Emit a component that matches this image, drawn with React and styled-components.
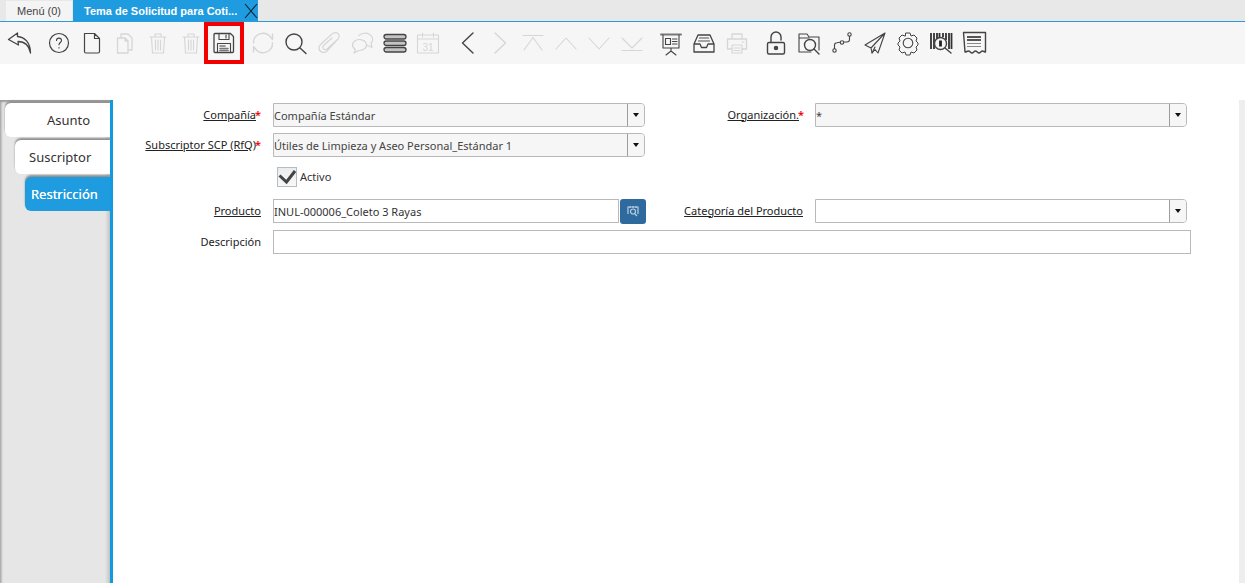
import React from 'react';
import styled, { createGlobalStyle } from 'styled-components';

const GlobalStyle = createGlobalStyle`
  html, body {
    margin: 0;
    padding: 0;
    background: #fff;
  }
  body {
    font-family: "Noto Sans", "Open Sans", sans-serif;
    color: #333;
    overflow: hidden;
  }
`;

const Page = styled.div`
  width: 1245px;
  height: 583px;
  display: flex;
  flex-direction: column;
  overflow: hidden;
`;

const TabStrip = styled.div`
  height: 21px;
  flex: none;
  display: flex;
  align-items: flex-end;
  padding-left: 6px;
  background: #e8e8e8;
  border-bottom: 1px solid #2d9bd8;
  font-family: "Liberation Sans", Arial, sans-serif;
  font-size: 11px;
`;

const MenuTab = styled.div`
  width: 66px;
  height: 20px;
  display: flex;
  align-items: center;
  justify-content: center;
  background: #f4f4f4;
  color: #444;
`;

const ActiveTab = styled.div`
  width: 185px;
  height: 21px;
  margin-left: 1px;
  padding-left: 11px;
  box-sizing: border-box;
  display: flex;
  align-items: center;
  background: #1f9ce0;
  color: #fff;
  font-weight: bold;
`;

const TabTitle = styled.span`
  width: 160px;
  white-space: nowrap;
`;

const Toolbar = styled.div`
  height: 42px;
  flex: none;
  display: flex;
  align-items: center;
  padding-left: 3.5px;
  background: #f6f6f6;
`;

const ToolButton = styled.div`
  position: relative;
  width: 33px;
  height: 42px;
  flex: none;
  display: flex;
  align-items: center;
  justify-content: center;
  margin-right: ${p => (p.$groupEnd ? '6px' : '0')};
  color: ${p => (p.$off ? '#d6d6d6' : '#444')};

  ${p => p.$marked && `
    &::after {
      content: '';
      position: absolute;
      left: -3.5px;
      top: 0;
      width: 40px;
      height: 42px;
      box-sizing: border-box;
      border: 4px solid #f00000;
    }
  `}
`;

const Spacer = styled.div`
  height: 36px;
  flex: none;
`;

const Body = styled.div`
  flex: 1;
  display: flex;
  min-height: 0;
`;

const SideTabs = styled.div`
  width: 110px;
  flex: none;
  display: flex;
  flex-direction: column;
  padding-top: 3px;
  box-sizing: border-box;
  background: linear-gradient(to right, #a8a8a8 0, #e6e6e6 3px, #e6e6e6 105px, #c4c4c4 110px);
  box-shadow: inset 0 3px 2px -1px #9a9a9a;
`;

const SideTab = styled.div`
  height: 34px;
  margin-left: ${p => p.$indent}px;
  margin-bottom: 3px;
  padding-left: ${p => p.$pad}px;
  display: flex;
  align-items: center;
  border-radius: 6px 0 0 6px;
  font-size: 13px;
  color: ${p => (p.$active ? '#fff' : '#333')};
  text-shadow: ${p => (p.$active ? '0 0 0.6px #fff' : 'none')};
  background: ${p => (p.$active ? '#1f9ce0' : '#fff')};
  box-shadow: 0 -2px 2px #8f8f8f;
`;

const Divider = styled.div`
  width: 3px;
  flex: none;
  background: #0f9ae2;
`;

const Content = styled.div`
  flex: 1;
  min-width: 0;
  padding-top: 3px;
`;

const FormRow = styled.div`
  display: flex;
  align-items: center;
  height: 24px;
  margin-bottom: ${p => p.$gap}px;
`;

const Label = styled.div`
  width: ${p => p.$width}px;
  flex: none;
  text-align: right;
  font-size: 11px;
  line-height: 16px;
  white-space: nowrap;
  margin-top: -1px;
`;

const LabelText = styled.span`
  text-decoration: ${p => (p.$plain ? 'none' : 'underline')};
  color: #222;
`;

const Required = styled.span`
  margin-left: -1px;
  color: #f00000;
  font-weight: 600;
`;

const Select = styled.div`
  width: ${p => p.$width}px;
  height: 24px;
  flex: none;
  margin-left: ${p => p.$offset}px;
  box-sizing: border-box;
  display: flex;
  border: 1px solid #b9b9b9;
  border-radius: 0 4px 4px 0;
  background: ${p => (p.$blank ? '#fff' : '#f6f6f6')};
`;

const SelectValue = styled.div`
  flex: 1;
  min-width: 0;
  display: flex;
  align-items: center;
  font-size: 11px;
  color: #444;
  white-space: nowrap;
`;

const SelectButton = styled.div`
  width: 16px;
  flex: none;
  display: flex;
  align-items: center;
  justify-content: center;
  background: #f6f6f6;
  border-left: 1px solid #9c9c9c;
  border-radius: 0 3px 3px 0;

  &::before {
    content: '';
    width: 0;
    height: 0;
    border-left: 3.5px solid transparent;
    border-right: 3.5px solid transparent;
    border-top: 4px solid #111;
  }
`;

const TextInput = styled.div`
  width: ${p => p.$width}px;
  height: 24px;
  flex: none;
  margin-left: ${p => p.$offset}px;
  box-sizing: border-box;
  display: flex;
  align-items: center;
  border: 1px solid #b9b9b9;
  background: #fff;
  font-size: 11px;
  color: #333;
  white-space: nowrap;
`;

const SearchButton = styled.div`
  width: 26px;
  height: 25px;
  flex: none;
  margin-left: 1px;
  display: flex;
  align-items: center;
  justify-content: center;
  border-radius: 3px;
  background: #2f6a9e;
`;

const CheckRow = styled.div`
  height: 23px;
  margin-bottom: 11px;
  padding-left: 164px;
  display: flex;
  align-items: center;
  gap: 3px;
  font-size: 11px;
  color: #333;
`;

const CheckBox = styled.div`
  width: 20px;
  height: 20px;
  box-sizing: border-box;
  display: flex;
  align-items: center;
  justify-content: center;
  border: 1px solid #b4bcc4;
  background: linear-gradient(#ececec, #f8f8f8);
`;

const Scrollbar = styled.div`
  width: 6px;
  flex: none;
  background: #eeeeee;
`;

const Icon = ({ children }) => (
  <svg width="26" height="26" viewBox="0 0 26 26" fill="none" stroke="currentColor" strokeWidth="1.1" strokeLinecap="round" strokeLinejoin="round">
    {children}
  </svg>
);

const trash = (
  <>
    <path d="M5 7h16M10 7V4h6v3M6.500 7l1 16h11l1-16" />
    <path d="M10.500 10v10M13 10v10M15.500 10v10" />
  </>
);

const icons = [
  { end: true, d: <path d="M10.500 3 1.500 9.500l10 5.500-.5-3.500c6 0 11 3.500 12.500 11.500 0-10-5.500-16-13-16.500z" strokeWidth="1.300" /> },
  { d: <><circle cx="13" cy="13" r="9.500" strokeWidth="1.200" /><path d="M10.500 10.500c0-3.200 5-3.200 5 0 0 2-2.500 2-2.500 4.200" /><path d="M13 17.600v.4" /></> },
  { d: <path d="M5.500 3.500h10l5 5v13a1.500 1.500 0 0 1-1.500 1.500H7a1.500 1.500 0 0 1-1.500-1.500zM15.500 3.500v5h5" strokeWidth="1.200" /> },
  { off: true, d: <path d="M9 7V4h7l4 4v12h-4M5.500 8h7.500l3 3v12H5.500zM13 8v3h3" strokeWidth="1.300" /> },
  { off: true, d: trash },
  { off: true, d: trash },
  { marked: true, end: true, d: <><path d="M4 3.500h15.500l3 3v15a1 1 0 0 1-1 1H4a1 1 0 0 1-1-1v-17a1 1 0 0 1 1-1z" strokeWidth="1.300" /><path d="M8 3.500v6h10v-6M15 5v3" /><path d="M6.500 22.500v-9h13v9" /><path d="M9 16h5M9 18.500h8M9 20.500h8" stroke="#777" strokeWidth="1.600" /></> },
  { off: true, d: <path d="M3.500 13a9.500 9.500 0 0 1 17-6l2 2.500V4M22.500 13a9.500 9.500 0 0 1-17 6l-2-2.500V22" strokeWidth="1.400" /> },
  { d: <><circle cx="11" cy="12" r="8" strokeWidth="1.400" /><path d="m17 18 6 5.500" strokeWidth="1.400" /></> },
  { off: true, d: <path d="M21 10 11 21c-3 3-8 1-8-3 0-2 1-3 2-4L16 4c2-2 6-2 7 1 .5 2 0 3-1 4L11 19c-2 1.500-5 0-4-3l9-8" strokeWidth="1.200" /> },
  { off: true, d: <><path d="M5 23l1.500-3.500A7 5.500 0 1 1 10 20.500z" strokeWidth="1.200" /><path d="M10 5.500A7 5.500 0 0 1 22 13l1 4.500-4.500-2" strokeWidth="1.200" /></> },
  { d: <><rect x="2" y="4.500" width="22" height="4.500" rx="2.200" strokeWidth="1.300" fill="#c4c4c4" /><rect x="2" y="11" width="22" height="4.500" rx="2.200" strokeWidth="1.300" fill="#c4c4c4" /><rect x="2" y="17.500" width="22" height="4.500" rx="2.200" strokeWidth="1.300" fill="#c4c4c4" /></> },
  { off: true, end: true, d: <><rect x="2.500" y="5" width="21" height="18" /><path d="M2.500 9h21M7.500 3v4M18.500 3v4" /><text x="13" y="20.500" fontSize="10" textAnchor="middle" stroke="none" fill="currentColor" fontFamily="Liberation Sans, sans-serif">31</text></> },
  { d: <path d="M19 3 8.500 13 19 23" strokeWidth="1.400" /> },
  { off: true, d: <path d="m8 3 10.500 10L8 23" strokeWidth="1.400" /> },
  { off: true, d: <path d="M3 5.500h20M4 20 13 7.500 22 20" /> },
  { off: true, d: <path d="M3 19 13 8l10 11" /> },
  { off: true, d: <path d="M3 8l10 11L23 8" /> },
  { off: true, end: true, d: <path d="M3 20.500h20M3 8l10 10L23 8" /> },
  { d: <><path d="M3 4.500h20" strokeWidth="2" stroke="#777" /><path d="M5 5v13h16V5M13 18v3M8 25l5-4 5 4" /><rect x="7.500" y="8.500" width="5" height="6" /><path d="M14.500 9h4.500M14.500 11.500h4.500M14.500 14h4.500" /></> },
  { d: <><path d="M3 14 7 5h12l4 9v8H3zM3 14h6l1.500 3.500h5L17 14h6" strokeWidth="1.300" /><path d="M8.500 8h9M7.500 11h11" stroke="#888" strokeWidth="1.500" /></> },
  { off: true, end: true, d: <><path d="M8 9V4h10v5M8 19H3.500V9h19v10H18" strokeWidth="1.300" /><path d="M8 15h10v8H8zM10 18h6M10 20.500h6" /><path d="M18 12h2" /></> },
  { d: <><rect x="4.500" y="12.500" width="17" height="11.500" rx="1.500" strokeWidth="1.400" /><path d="M8 12.500V7a5 5 0 0 1 10 0v3" strokeWidth="1.400" /><circle cx="13" cy="18" r="1.700" fill="currentColor" /></> },
  { d: <><path d="M3 22V4h8l2 3h10v13M3 8h10M3 22h12" /><circle cx="14" cy="15" r="5.500" strokeWidth="1.400" /><path d="m18 19 5 5" strokeWidth="1.400" /></> },
  { d: <><circle cx="5.500" cy="20.500" r="1.700" /><circle cx="13" cy="12.500" r="1.700" /><circle cx="20.500" cy="4.500" r="1.700" /><path d="M5.500 18.500V15q0-2 2.500-2.200l3-.5M15 12h3q2.500 0 2.500-2.500v-3" /></> },
  { d: <><path d="M23 3 3 15l6 3zM23 3 9 18l1 5 3-3.500 3 3.500z" /><path d="M10 23l3-6" /></> },
  { d: <><path d="M11 3h4l1 3 3-1 3 3-1 3 2 2v2l-2 2 1 3-3 3-3-1-1 3h-4l-1-3-3 1-3-3 1-3-2-2v-2l2-2-1-3 3-3 3 1z" strokeWidth="1" /><circle cx="13" cy="13" r="4.800" /></> },
  { d: <><path d="M3 3v16M6 3v16M9 3v6M11.500 3v4M15 3v4M18 3v7M21 3v16M23.500 3v16" stroke="#333" strokeWidth="1.800" strokeLinecap="butt" /><circle cx="12.500" cy="13.500" r="6" strokeWidth="1.400" fill="#f6f6f6" /><path d="M12.500 10.500v6" strokeWidth="2.800" strokeLinecap="butt" stroke="#222" /><path d="m17 18 6 5" strokeWidth="1.400" /></> },
  { d: <><path d="M2.500 2.500h22v19.500c-1 0-2-1-3-1-1.500 0-2 2-3.500 2s-2-2-3.500-2-2 2-3.500 2-2-2-3.500-2c-1.500 0-2 1-3.500 1z" strokeWidth="1.400" /><path d="M6 7h14M6 10h14" strokeWidth="2" stroke="#555" strokeLinecap="butt" /><path d="M6 13.500h14M6 16.500h14" strokeWidth="1.100" stroke="#888" strokeLinecap="butt" /></> },
];

const App = () => (
  <Page>
    <GlobalStyle />
    <TabStrip>
      <MenuTab>Menú (0)</MenuTab>
      <ActiveTab>
        <TabTitle>Tema de Solicitud para Coti...</TabTitle>
        <svg width="14" height="16" viewBox="0 0 14 16" fill="none" stroke="#123" strokeWidth="1.100">
          <path d="m1 1 12 14M13 1 1 15" />
        </svg>
      </ActiveTab>
    </TabStrip>
    <Toolbar>
      {icons.map((icon, i) => (
        <ToolButton key={i} $off={icon.off} $groupEnd={icon.end} $marked={icon.marked}>
          <Icon>{icon.d}</Icon>
        </ToolButton>
      ))}
    </Toolbar>
    <Spacer />
    <Body>
      <SideTabs>
        <SideTab $indent={5} $pad={42}>Asunto</SideTab>
        <SideTab $indent={15} $pad={14}>Suscriptor</SideTab>
        <SideTab $indent={25} $pad={6} $active>Restricción</SideTab>
      </SideTabs>
      <Divider />
      <Content>
        <FormRow $gap={6}>
          <Label $width={148}>
            <LabelText>Compañía</LabelText><Required>*</Required>
          </Label>
          <Select $width={372} $offset={12}>
            <SelectValue>Compañía Estándar</SelectValue>
            <SelectButton />
          </Select>
          <Label $width={159}>
            <LabelText>Organización.</LabelText><Required>*</Required>
          </Label>
          <Select $width={372} $offset={11}>
            <SelectValue>*</SelectValue>
            <SelectButton />
          </Select>
        </FormRow>
        <FormRow $gap={8}>
          <Label $width={148}>
            <LabelText>Subscriptor SCP (RfQ)</LabelText><Required>*</Required>
          </Label>
          <Select $width={372} $offset={12}>
            <SelectValue>Útiles de Limpieza y Aseo Personal_Estándar 1</SelectValue>
            <SelectButton />
          </Select>
        </FormRow>
        <CheckRow>
          <CheckBox>
            <svg width="18" height="16" viewBox="0 0 18 16" fill="none" stroke="#444" strokeWidth="3">
              <path d="M1.500 6.500l7 6.500 8.500-11" />
            </svg>
          </CheckBox>
          Activo
        </CheckRow>
        <FormRow $gap={7}>
          <Label $width={148}><LabelText>Producto</LabelText></Label>
          <TextInput $width={346} $offset={12}>INUL-000006_Coleto 3 Rayas</TextInput>
          <SearchButton>
            <svg width="12" height="12" viewBox="0 0 12 12" fill="none" stroke="#b8cfe2" strokeWidth="1.200">
              <path d="M1 9V2h10v7M3 1v2M6 1v2M9 1v2" />
              <circle cx="6" cy="6.500" r="2.500" />
              <path d="m8 9 2 2" />
            </svg>
          </SearchButton>
          <Label $width={157}><LabelText>Categoría del Producto</LabelText></Label>
          <Select $width={372} $offset={12} $blank>
            <SelectValue />
            <SelectButton />
          </Select>
        </FormRow>
        <FormRow $gap={0}>
          <Label $width={148}><LabelText $plain>Descripción</LabelText></Label>
          <TextInput $width={918} $offset={12} />
        </FormRow>
      </Content>
      <Scrollbar />
    </Body>
  </Page>
);

export default App;
